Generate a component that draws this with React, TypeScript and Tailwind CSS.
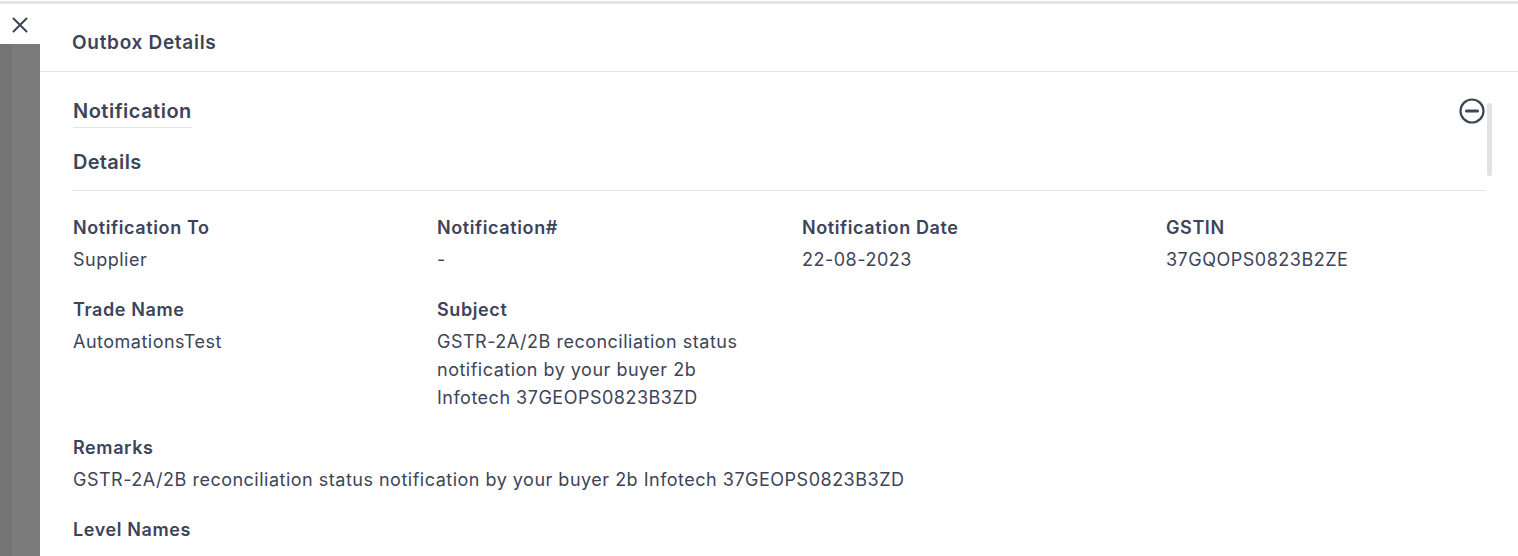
import React from "react";

const font = { fontFamily: "Inter, 'Noto Sans', sans-serif" };

function Field({ label, value }: { label: string; value: React.ReactNode }) {
  return (
    <div className="flex flex-col">
      <div className="text-[18px] font-semibold leading-[24px] tracking-[0.6px] text-[#3d4459]">{label}</div>
      <div className="mt-[6px] text-[18px] leading-[28px] tracking-[0.5px] text-[#3d4459]">{value}</div>
    </div>
  );
}

export default function App() {
  return (
    <div style={font} className="relative h-[556px] w-[1518px] overflow-hidden bg-white">
      <div className="absolute left-0 right-0 top-[1px] z-20 h-[3px] bg-[#e4e4e4]" />
      <div className="flex h-full">
        {/* left overlay */}
        <div className="relative flex w-[40px] shrink-0 flex-col">
          <div className="z-10 flex h-[44px] w-[40px] shrink-0 items-center justify-center rounded-br-[4px] bg-white pt-[6px]">
            <svg width="16" height="16" viewBox="0 0 16 16" fill="none" stroke="#3d4459" strokeWidth="2" strokeLinecap="round">
              <path d="M1.5 1.5 L14.5 14.5 M14.5 1.5 L1.5 14.5" />
            </svg>
          </div>
          <div className="flex flex-1 bg-[#7b7b7b]">
            <div className="w-[12px] bg-[#747474]" />
            <div className="flex-1" />
          </div>
        </div>
        {/* panel */}
        <div className="flex min-w-0 flex-1 flex-col pt-[4px]">
          <div className="flex h-[68px] shrink-0 items-center border-b border-[#e3e4ea] pl-[32px] pt-[12px]">
            <span className="text-[19px] font-semibold tracking-[0.7px] text-[#3d4459]">Outbox Details</span>
          </div>
          <div className="relative flex flex-1 flex-col pl-[33px] pr-[32px]">
            <div className="mt-[25px] flex shrink-0 items-start justify-between">
              <div className="border-b border-[#e3e4ea] pb-[2px] text-[20px] font-semibold leading-[28px] tracking-[0.5px] text-[#3d4459]">
                Notification
              </div>
              <svg width="28" height="28" viewBox="0 0 28 28" fill="none">
                <circle cx="14" cy="14" r="11.5" stroke="#3d4459" strokeWidth="2.2" />
                <path d="M8.5 14 H19.5" stroke="#3d4459" strokeWidth="3" strokeLinecap="round" />
              </svg>
            </div>
            <div className="absolute right-[26px] top-[31px] h-[73px] w-[5px] rounded-full bg-[#e2e2e2]" />
            <div className="mt-[21px] shrink-0 border-b border-[#e3e4ea] pb-[15px] text-[20px] font-semibold leading-[26px] tracking-[0.3px] text-[#3d4459]">
              Details
            </div>
            <div className="mt-[25px] grid shrink-0 grid-cols-[364px_365px_364px_1fr] gap-y-[24px]">
              <Field label="Notification To" value="Supplier" />
              <Field label="Notification#" value="-" />
              <Field label="Notification Date" value="22-08-2023" />
              <Field label="GSTIN" value="37GQOPS0823B2ZE" />
              <Field label="Trade Name" value="AutomationsTest" />
              <Field
                label="Subject"
                value={
                  <div className="w-[320px]">
                    GSTR-2A/2B reconciliation status notification by your buyer 2b Infotech 37GEOPS0823B3ZD
                  </div>
                }
              />
              <div />
              <div />
              <div className="col-span-4">
                <Field
                  label="Remarks"
                  value="GSTR-2A/2B reconciliation status notification by your buyer 2b Infotech 37GEOPS0823B3ZD"
                />
              </div>
              <div className="col-span-4">
                <Field label="Level Names" value="" />
              </div>
            </div>
          </div>
        </div>
      </div>
    </div>
  );
}
